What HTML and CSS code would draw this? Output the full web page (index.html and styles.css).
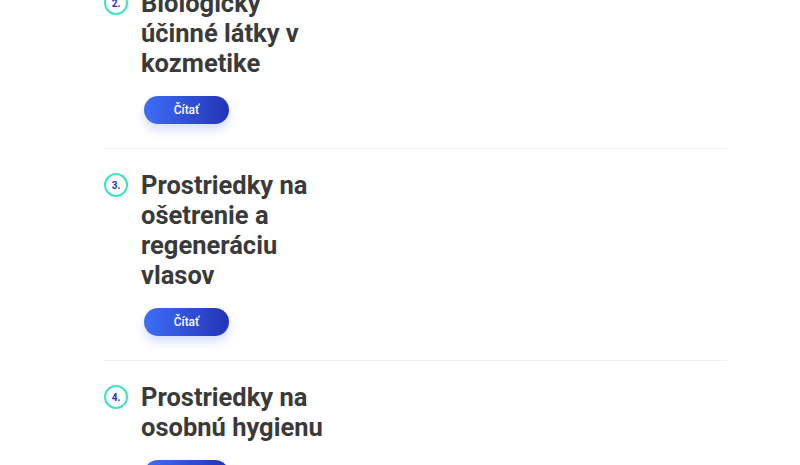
FILE: index.html
```html
<!DOCTYPE html>
<html lang="sk">
<head>
  <meta charset="UTF-8">
  <meta name="viewport" content="width=device-width, initial-scale=1.0">
  <title>Kategórie</title>
  <link rel="stylesheet" href="styles.css">
</head>
<body>
  <div class="chapter-list">
    <div class="chapter">
      <span class="chapter-num">2.</span>
      <div class="chapter-body">
        <h2>Biologicky účinné látky v kozmetike</h2>
        <button class="read-btn">Čítať</button>
      </div>
    </div>
    <div class="chapter">
      <span class="chapter-num">3.</span>
      <div class="chapter-body">
        <h2>Prostriedky na ošetrenie a regeneráciu vlasov</h2>
        <button class="read-btn">Čítať</button>
      </div>
    </div>
    <div class="chapter">
      <span class="chapter-num">4.</span>
      <div class="chapter-body">
        <h2>Prostriedky na osobnú hygienu</h2>
        <button class="read-btn">Čítať</button>
      </div>
    </div>
  </div>
</body>
</html>
```

FILE: styles.css
```css
body {
  font-family: Roboto, Arial, sans-serif;
  background: #fff;
  margin: 0;
  overflow: hidden;
}
.chapter-list {
  width: 623px;
  margin: -34px 0 0 104px;
}
.chapter {
  display: flex;
  align-items: flex-start;
  gap: 13px;
  padding: 21px 0 24px;
  border-top: 1px solid #f0f0f0;
}
.chapter-num {
  flex: none;
  width: 20px;
  height: 20px;
  margin-top: 3px;
  border: 2px solid #3ee3c3;
  border-radius: 50%;
  display: flex;
  justify-content: center;
  align-items: center;
  font-size: 10px;
  font-weight: 700;
  color: #2233bb;
}
.chapter-body {
  width: 186px;
}
h2 {
  margin: 0;
  font-size: 25.5px;
  line-height: 30px;
  font-weight: 700;
  color: #3a3a3a;
}
.read-btn {
  display: block;
  margin: 18px 0 0 3px;
  width: 85px;
  height: 28px;
  border: none;
  border-radius: 14px;
  background: linear-gradient(90deg, #3e6ef7, #2434b6);
  box-shadow: 0 6px 10px rgba(70, 110, 245, 0.22);
  color: #fff;
  font-family: Roboto, Arial, sans-serif;
  font-size: 12px;
  font-weight: 500;
  cursor: pointer;
}
```
